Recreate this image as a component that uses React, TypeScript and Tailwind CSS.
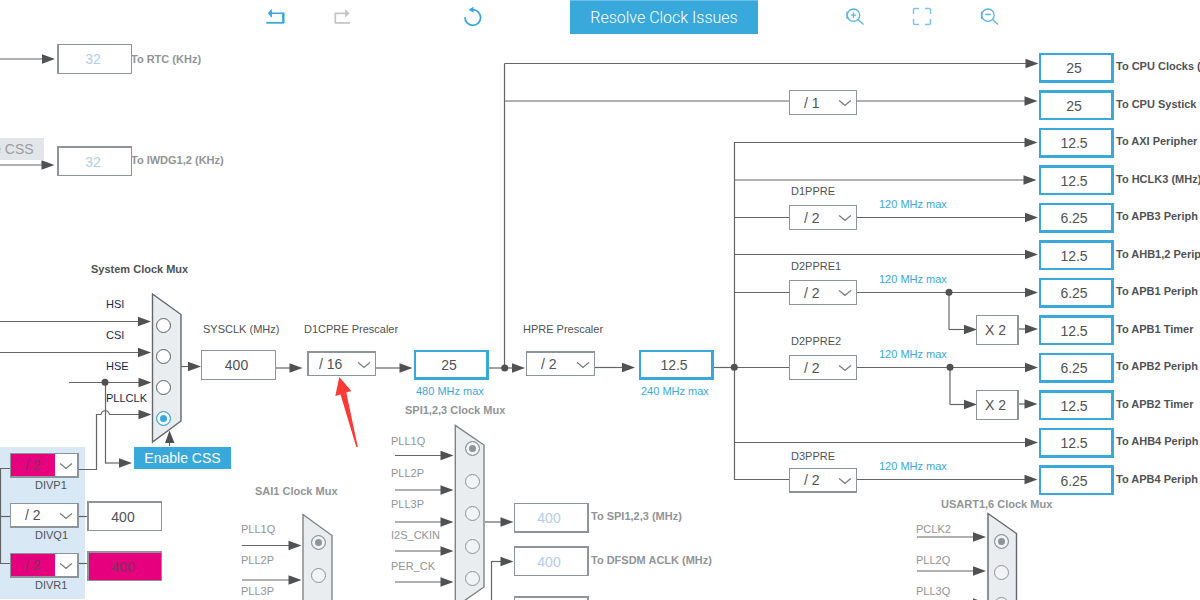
import type { ReactNode } from 'react';

type Tone = 'dark' | 'dim' | 'link' | 'navy';

const toneClass: Record<Tone, string> = {
  dark: 'text-[#505356]',
  dim: 'text-[#919598]',
  link: 'text-[#39a9dc]',
  navy: 'text-[#14284b]',
};

interface CaptionProps {
  at: string;
  text: string;
  tone?: Tone;
  bold?: boolean;
  target?: string;
}

function Caption({ at, text, tone = 'dark', bold = false, target }: CaptionProps) {
  const cls = `absolute whitespace-nowrap text-[11px] leading-4 ${bold ? 'font-bold' : ''} ${toneClass[tone]} ${at}`;
  return target ? (
    <label htmlFor={target} className={cls}>{text}</label>
  ) : (
    <span className={cls}>{text}</span>
  );
}

type BoxLook = 'active' | 'plain' | 'dim' | 'error';

const boxClass: Record<BoxLook, string> = {
  active: 'border-[#39a9dc] bg-white text-[#505356]',
  plain: 'border-[#8d949a] bg-white text-[#505356]',
  dim: 'border-[#8d949a] bg-white text-[#b3cce8]',
  error: 'border-[#8d949a] bg-[#e6007e] text-[#7c3460]',
};

interface ValueBoxProps {
  id: string;
  at: string;
  value: string;
  look: BoxLook;
  edges: string;
  name?: string;
}

function ValueBox({ id, at, value, look, edges, name }: ValueBoxProps) {
  return (
    <input
      id={id}
      type="text"
      readOnly
      defaultValue={value}
      aria-label={name}
      className={`absolute h-[30px] w-[75px] rounded-none pr-1 text-center text-sm outline-none ${boxClass[look]} ${edges} ${at}`}
    />
  );
}

interface DividerProps {
  id: string;
  at: string;
  value: string;
  edges?: string;
  wide?: boolean;
  pad?: string;
  error?: boolean;
  name?: string;
}

function Divider({ id, at, value, edges = 'border', wide = false, pad = 'pl-3.5', error = false, name }: DividerProps) {
  return (
    <div className={`absolute flex h-[25px] ${wide ? 'w-[69px]' : 'w-[68px]'} border-[#8d949a] bg-white ${edges} ${at}`}>
      <select
        id={id}
        aria-label={name}
        defaultValue={value}
        className={`h-full w-full appearance-none rounded-none text-sm leading-4 outline-none ${pad} ${
          error
            ? 'bg-[linear-gradient(to_right,#e6007e_44px,#ffffff_44px)] text-[#7c3460]'
            : 'bg-white text-[#505356]'
        }`}
      >
        <option value={value}>{value}</option>
      </select>
      <svg className="pointer-events-none absolute top-2 right-1 h-2 w-3.5" viewBox="0 0 14 8" fill="none" stroke="#777b7f" strokeWidth="1.2" aria-hidden="true">
        <path d="M1 1.5 L3 3 L7 6.5 L11 3 L13 1.5" />
      </svg>
    </div>
  );
}

interface RadioProps {
  at: string;
  group: string;
  name: string;
  checked?: boolean;
  dim?: boolean;
}

function Radio({ at, group, name, checked = false, dim = false }: RadioProps) {
  return (
    <input
      type="radio"
      name={group}
      aria-label={name}
      defaultChecked={checked}
      className={`absolute size-[15px] appearance-none rounded-full border ${
        dim
          ? 'border-[#8d949a] bg-[#f1f3f5] checked:bg-[#8d949a] checked:shadow-[inset_0_0_0_3px_#f1f3f5]'
          : 'border-[#5b5f63] bg-white checked:border-[#39a9dc] checked:bg-[#39a9dc] checked:shadow-[inset_0_0_0_3px_#ffffff]'
      } ${at}`}
    />
  );
}

function ToolButton({ label, disabled, children }: { label: string; disabled?: boolean; children: ReactNode }) {
  return (
    <button type="button" aria-label={label} disabled={disabled} className="flex h-[34px] w-[22px] items-center justify-center">
      <svg className="size-[22px]" viewBox="0 0 22 22" fill="none" aria-hidden="true">
        {children}
      </svg>
    </button>
  );
}

const dividedRows = [
  { y: 63.5, from: 504.5, tip: 1038.5 },
  { y: 101, from: 504.5, tip: 1037.5 },
  { y: 142.5, from: 734.5, tip: 1037.5 },
  { y: 180, from: 734.5, tip: 1036.5 },
  { y: 217.5, from: 734.5, tip: 1038 },
  { y: 254.5, from: 734.5, tip: 1038 },
  { y: 292.5, from: 734.5, tip: 1038 },
  { y: 329, from: 1019, tip: 1038 },
  { y: 367.5, from: 734.5, tip: 1038 },
  { y: 404, from: 1019, tip: 1037.5 },
  { y: 442.5, from: 734.5, tip: 1038 },
  { y: 479.5, from: 734.5, tip: 1037.5 },
];

const arrows = [
  ...dividedRows,
  { y: 59, from: 0, tip: 55 },
  { y: 165, from: 0, tip: 54.5 },
  { y: 321.5, from: 0, tip: 151 },
  { y: 352.5, from: 0, tip: 151 },
  { y: 382.5, from: 69, tip: 151.5 },
  { y: 414.5, from: 109, tip: 151.5 },
  { y: 463, from: 105.5, tip: 132 },
  { y: 366.5, from: 181, tip: 201 },
  { y: 368, from: 276, tip: 302.5 },
  { y: 368, from: 376, tip: 412.5 },
  { y: 368, from: 489, tip: 525 },
  { y: 367.5, from: 595, tip: 635 },
  { y: 329.5, from: 949, tip: 977 },
  { y: 404.5, from: 950, tip: 977 },
  { y: 455.5, from: 395, tip: 453.5 },
  { y: 490, from: 395, tip: 453.5 },
  { y: 522, from: 395, tip: 453.5 },
  { y: 551, from: 395, tip: 453.5 },
  { y: 582, from: 395, tip: 453.5 },
  { y: 522, from: 485, tip: 513.5 },
  { y: 561.5, from: 491.5, tip: 513.5 },
  { y: 545.5, from: 242, tip: 301.5 },
  { y: 580, from: 242, tip: 301.5 },
  { y: 537, from: 917, tip: 986 },
  { y: 571, from: 917, tip: 986 },
  { y: 603, from: 917, tip: 986 },
];

const wires = [
  'M504.5 368V63.5',
  'M734.5 142V480',
  'M714 367.5H734',
  'M949 292V329.5',
  'M950 367V404.5',
  'M105.5 382V463.5',
  'M79 469.5H96.5V414.5H101C102 409.500 108.500 409.500 109.500 414.500',
  'M10 468.500H0.500V563.500H10',
  'M0 516.500H10',
  'M79 516.500H87',
  'M79 563.500H87',
  'M491.500 600V561',
  'M169.500 446V440',
];

function Wiring() {
  return (
    <svg className="absolute inset-0 size-full" aria-hidden="true">
      <g fill="none" stroke="#636567" strokeWidth="1.2">
        {wires.map((d) => (
          <path key={d} d={d} />
        ))}
      </g>
      {arrows.map(({ y, from, tip }) => (
        <g key={`${from}-${y}`}>
          <path d={`M${from} ${y}H${tip - 10}`} stroke="#636567" strokeWidth="1.2" />
          <path d={`M${tip} ${y}L${tip - 13} ${y - 4.8}V${y + 4.8}Z`} fill="#4f5152" />
        </g>
      ))}
      <path d="M169.500 430.500L165 443H174.500Z" fill="#4f5152" />
      <g fill="#4f5152">
        <circle cx="105" cy="382.3" r="3.5" />
        <circle cx="504.7" cy="368" r="3.5" />
        <circle cx="734.3" cy="367.3" r="3.5" />
        <circle cx="949" cy="292.3" r="3.5" />
        <circle cx="950" cy="367.3" r="3.5" />
      </g>
      <g fill="#e9edf0" strokeWidth="1.4">
        <path d="M152.500 294L181 314.500V421L152.500 442Z" stroke="#63676b" />
        <path d="M455.300 425.300L484 445V587L455.300 607Z" stroke="#7e8386" />
        <path d="M303 514.500L332 535.500V620H303Z" stroke="#7e8386" />
        <path d="M988 513.500L1016.500 533.500V620H988Z" stroke="#63676b" />
      </g>
      <path d="M339.300 377L351.300 391L346.300 392.500L357.800 447L356.300 447L340.500 394.500L335.300 396Z" fill="#fb3a37" />
    </svg>
  );
}

const evenEdge = 'border-2 border-r-[3px] border-b-[3px]';
const oddEdge = 'border-2 border-r-[3px] border-t-[3px]';

const outputs = [
  { id: 'cpu', box: 'left-[1039px] top-[53px]', cap: 'left-[1116px] top-[58px]', value: '25', text: 'To CPU Clocks (', edges: evenEdge },
  { id: 'systick', box: 'left-[1039px] top-[90px]', cap: 'left-[1116px] top-[96px]', value: '25', text: 'To CPU Systick', edges: oddEdge },
  { id: 'axi', box: 'left-[1039px] top-[128px]', cap: 'left-[1116px] top-[133px]', value: '12.5', text: 'To AXI Peripher', edges: evenEdge },
  { id: 'hclk3', box: 'left-[1039px] top-[165px]', cap: 'left-[1116px] top-[171px]', value: '12.5', text: 'To HCLK3 (MHz)', edges: oddEdge },
  { id: 'apb3', box: 'left-[1039px] top-[203px]', cap: 'left-[1116px] top-[208px]', value: '6.25', text: 'To APB3 Periph', edges: evenEdge },
  { id: 'ahb12', box: 'left-[1039px] top-[240px]', cap: 'left-[1116px] top-[246px]', value: '12.5', text: 'To AHB1,2 Perip', edges: oddEdge },
  { id: 'apb1', box: 'left-[1039px] top-[278px]', cap: 'left-[1116px] top-[283px]', value: '6.25', text: 'To APB1 Periph', edges: evenEdge },
  { id: 'apb1t', box: 'left-[1039px] top-[315px]', cap: 'left-[1116px] top-[321px]', value: '12.5', text: 'To APB1 Timer', edges: oddEdge },
  { id: 'apb2', box: 'left-[1039px] top-[353px]', cap: 'left-[1116px] top-[358px]', value: '6.25', text: 'To APB2 Periph', edges: evenEdge },
  { id: 'apb2t', box: 'left-[1039px] top-[390px]', cap: 'left-[1116px] top-[396px]', value: '12.5', text: 'To APB2 Timer', edges: oddEdge },
  { id: 'ahb4', box: 'left-[1039px] top-[428px]', cap: 'left-[1116px] top-[433px]', value: '12.5', text: 'To AHB4 Periph', edges: evenEdge },
  { id: 'apb4', box: 'left-[1039px] top-[465px]', cap: 'left-[1116px] top-[471px]', value: '6.25', text: 'To APB4 Periph', edges: oddEdge },
];

const captions: CaptionProps[] = [
  { at: 'left-[131px] top-[51px]', text: 'To RTC (KHz)', tone: 'dim', bold: true, target: 'rtc' },
  { at: 'left-[131px] top-[152px]', text: 'To IWDG1,2 (KHz)', tone: 'dim', bold: true, target: 'iwdg' },
  { at: 'left-[91px] top-[261px]', text: 'System Clock Mux', bold: true },
  { at: 'left-[255px] top-[483px]', text: 'SAI1 Clock Mux', tone: 'dim', bold: true },
  { at: 'left-[405px] top-[402px]', text: 'SPI1,2,3 Clock Mux', tone: 'dim', bold: true },
  { at: 'left-[941px] top-[496px]', text: 'USART1,6 Clock Mux', tone: 'dim', bold: true },
  { at: 'left-[591px] top-[508px]', text: 'To SPI1,2,3 (MHz)', tone: 'dim', bold: true, target: 'spi' },
  { at: 'left-[591px] top-[552px]', text: 'To DFSDM ACLK (MHz)', tone: 'dim', bold: true, target: 'dfsdm' },
  { at: 'left-[106px] top-[296px]', text: 'HSI', tone: 'navy' },
  { at: 'left-[106px] top-[327px]', text: 'CSI', tone: 'navy' },
  { at: 'left-[106px] top-[358px]', text: 'HSE', tone: 'navy' },
  { at: 'left-[106px] top-[390px]', text: 'PLLCLK', tone: 'navy' },
  { at: 'left-[203px] top-[321px]', text: 'SYSCLK (MHz)', target: 'sysclk' },
  { at: 'left-[304px] top-[321px]', text: 'D1CPRE Prescaler', target: 'd1cpre' },
  { at: 'left-[523px] top-[321px]', text: 'HPRE Prescaler', target: 'hpre' },
  { at: 'left-[416px] top-[383px]', text: '480 MHz max', tone: 'link' },
  { at: 'left-[641px] top-[383px]', text: '240 MHz max', tone: 'link' },
  { at: 'left-[791px] top-[183px]', text: 'D1PPRE', target: 'd1ppre' },
  { at: 'left-[791px] top-[258px]', text: 'D2PPRE1', target: 'd2ppre1' },
  { at: 'left-[791px] top-[333px]', text: 'D2PPRE2', target: 'd2ppre2' },
  { at: 'left-[791px] top-[448px]', text: 'D3PPRE', target: 'd3ppre' },
  { at: 'left-[879px] top-[196px]', text: '120 MHz max', tone: 'link' },
  { at: 'left-[879px] top-[271px]', text: '120 MHz max', tone: 'link' },
  { at: 'left-[879px] top-[346px]', text: '120 MHz max', tone: 'link' },
  { at: 'left-[879px] top-[458px]', text: '120 MHz max', tone: 'link' },
  { at: 'left-[35px] top-[477px]', text: 'DIVP1', target: 'divp1' },
  { at: 'left-[35px] top-[527px]', text: 'DIVQ1', target: 'divq1' },
  { at: 'left-[35px] top-[577px]', text: 'DIVR1', target: 'divr1' },
  { at: 'left-[391px] top-[433px]', text: 'PLL1Q', tone: 'dim' },
  { at: 'left-[391px] top-[465px]', text: 'PLL2P', tone: 'dim' },
  { at: 'left-[391px] top-[496px]', text: 'PLL3P', tone: 'dim' },
  { at: 'left-[391px] top-[527px]', text: 'I2S_CKIN', tone: 'dim' },
  { at: 'left-[391px] top-[558px]', text: 'PER_CK', tone: 'dim' },
  { at: 'left-[241px] top-[521px]', text: 'PLL1Q', tone: 'dim' },
  { at: 'left-[241px] top-[552px]', text: 'PLL2P', tone: 'dim' },
  { at: 'left-[241px] top-[583px]', text: 'PLL3P', tone: 'dim' },
  { at: 'left-[916px] top-[521px]', text: 'PCLK2', tone: 'dim' },
  { at: 'left-[916px] top-[552px]', text: 'PLL2Q', tone: 'dim' },
  { at: 'left-[916px] top-[583px]', text: 'PLL3Q', tone: 'dim' },
];

const radios: RadioProps[] = [
  { at: 'left-[156px] top-[318px]', group: 'system', name: 'HSI' },
  { at: 'left-[156px] top-[349px]', group: 'system', name: 'CSI' },
  { at: 'left-[156px] top-[380px]', group: 'system', name: 'HSE' },
  { at: 'left-[156px] top-[411px]', group: 'system', name: 'PLLCLK', checked: true },
  { at: 'left-[465px] top-[441px]', group: 'spi-mux', name: 'PLL1Q', checked: true, dim: true },
  { at: 'left-[465px] top-[474px]', group: 'spi-mux', name: 'PLL2P', dim: true },
  { at: 'left-[465px] top-[506px]', group: 'spi-mux', name: 'PLL3P', dim: true },
  { at: 'left-[465px] top-[539px]', group: 'spi-mux', name: 'I2S_CKIN', dim: true },
  { at: 'left-[465px] top-[571px]', group: 'spi-mux', name: 'PER_CK', dim: true },
  { at: 'left-[311px] top-[535px]', group: 'sai-mux', name: 'PLL1Q', checked: true, dim: true },
  { at: 'left-[311px] top-[568px]', group: 'sai-mux', name: 'PLL2P', dim: true },
  { at: 'left-[994px] top-[534px]', group: 'usart-mux', name: 'PCLK2', checked: true, dim: true },
  { at: 'left-[994px] top-[565px]', group: 'usart-mux', name: 'PLL2Q', dim: true },
  { at: 'left-[994px] top-[597px]', group: 'usart-mux', name: 'PLL3Q', dim: true },
];

function Toolbar() {
  return (
    <header className="z-10 col-start-1 row-start-1 flex h-[34px] items-center self-start pl-[264px]">
      <div className="flex gap-[45px]">
        <ToolButton label="Undo">
          <path d="M5 7.300H19.300V16.700" stroke="#39a9dc" strokeWidth="1.6" />
          <path d="M19.300 6.800V17" stroke="#39a9dc" strokeWidth="2.400" />
          <path d="M2.300 16.800H20" stroke="#39a9dc" strokeWidth="1.800" />
          <path d="M7.500 3.500L4.300 7.300L7.500 11.200Z" fill="#39a9dc" stroke="#39a9dc" strokeWidth="0.800" />
        </ToolButton>
        <ToolButton label="Redo" disabled>
          <path d="M16 7.300H4.300V16.800H19" stroke="#c4c4c4" strokeWidth="1.700" strokeLinejoin="round" />
          <path d="M14.500 3.800L18 7.300L14.500 11Z" fill="#c4c4c4" stroke="#c4c4c4" strokeWidth="0.800" />
        </ToolButton>
      </div>
      <div className="ml-[109px] flex">
        <ToolButton label="Reset">
          <path d="M3 11.300A7.800 7.800 0 1 0 10.800 3.700H8.500" stroke="#39a9dc" strokeWidth="1.800" />
          <path d="M11.500 0.800L6.500 3.700L11.500 6.700Z" fill="#39a9dc" />
        </ToolButton>
      </div>
      <button type="button" className="ml-[86px] h-[34px] w-[188px] shrink-0 border-t border-[#6cbfe5] bg-[#39a9dc] font-[Roboto,sans-serif] text-base font-light whitespace-nowrap text-white">
        Resolve Clock Issues
      </button>
      <div className="ml-[86px] flex gap-[45px]">
        <ToolButton label="Zoom in">
          <circle cx="9.500" cy="9.200" r="6.200" stroke="#5bb4de" strokeWidth="1.300" />
          <path d="M3 5.500V13M9.500 6.500V12M6.800 9.200H12.200M14 13.500L19.500 18.500" stroke="#5bb4de" strokeWidth="1.300" />
        </ToolButton>
        <ToolButton label="Fit to window">
          <path d="M2.500 8V4Q2.500 2.500 4 2.500H8M14 2.500H18Q19.500 2.500 19.500 4V8M19.500 13V17Q19.500 18.500 18 18.500H14M8 18.500H4Q2.500 18.500 2.500 17V13" stroke="#7cc4e8" strokeWidth="1.500" />
        </ToolButton>
        <ToolButton label="Zoom out">
          <circle cx="10" cy="9.200" r="6.200" stroke="#5bb4de" strokeWidth="1.300" />
          <path d="M3.500 5.500V13M7.200 8.500H12.800M14.500 13.500L20 18.500" stroke="#5bb4de" strokeWidth="1.300" />
        </ToolButton>
      </div>
    </header>
  );
}

export default function App() {
  return (
    <div className="grid min-h-screen overflow-hidden bg-white font-['Liberation_Sans',Arial,sans-serif]">
      <Toolbar />
      <main className="relative col-start-1 row-start-1 min-w-0 overflow-hidden">
        <div className="absolute top-[447px] left-0 h-[152px] w-[85px] bg-[#d9e8f5]" />
        <Wiring />

        <button type="button" disabled className="absolute top-[138px] left-[-53px] h-[22px] w-[97px] bg-[#e2e6e9] text-sm text-[#9a9da0]">
          Enable CSS
        </button>
        <button type="button" className="absolute top-[447px] left-[134px] h-[22px] w-[97px] bg-[#39a9dc] text-sm text-white">
          Enable CSS
        </button>

        <ValueBox id="rtc" at="left-[57px] top-[44px]" value="32" look="dim" edges="border border-l-2" />
        <ValueBox id="iwdg" at="left-[57px] top-[146px]" value="32" look="dim" edges="border border-t-2 border-l-2" />
        <ValueBox id="sysclk" at="left-[201px] top-[350px]" value="400" look="plain" edges="border" />
        <ValueBox id="cpuclk" at="left-[414px] top-[350px]" value="25" look="active" edges={evenEdge} name="D1CPRE output" />
        <ValueBox id="hclk" at="left-[639px] top-[350px]" value="12.5" look="active" edges={evenEdge} name="HPRE output" />
        <ValueBox id="pllq" at="left-[87px] top-[501px]" value="400" look="plain" edges="border border-t-2 border-l-2" name="DIVQ1 output" />
        <ValueBox id="pllr" at="left-[87px] top-[551px]" value="400" look="error" edges="border border-t-2 border-l-2" name="DIVR1 output" />
        <ValueBox id="spi" at="left-[514px] top-[503px]" value="400" look="dim" edges="border border-r-2 border-b-2" />
        <ValueBox id="dfsdm" at="left-[514px] top-[546px]" value="400" look="dim" edges="border border-t-2 border-r-2" />
        <ValueBox id="next" at="left-[514px] top-[596px]" value="" look="dim" edges="border border-t-2 border-r-2" name="Output" />

        <Divider id="divp1" at="left-[10px] top-[453px]" value="/ 2" wide error edges="border border-r-2 border-b-2" />
        <Divider id="divq1" at="left-[10px] top-[503px]" value="/ 2" wide edges="border border-r-2 border-b-2" />
        <Divider id="divr1" at="left-[10px] top-[553px]" value="/ 2" wide error edges="border border-r-2 border-b-2" />
        <Divider id="d1cpre" at="left-[307px] top-[351px]" value="/ 16" wide pad="pl-2.5" edges="border border-t-2 border-l-2" />
        <Divider id="hpre" at="left-[526px] top-[351px]" value="/ 2" wide edges="border border-t-2" />
        <Divider id="systick-div" at="left-[789px] top-[90px]" value="/ 1" name="CPU Systick prescaler" />
        <Divider id="d1ppre" at="left-[789px] top-[205px]" value="/ 2" />
        <Divider id="d2ppre1" at="left-[789px] top-[280px]" value="/ 2" />
        <Divider id="d2ppre2" at="left-[789px] top-[355px]" value="/ 2" />
        <Divider id="d3ppre" at="left-[789px] top-[468px]" value="/ 2" edges="border border-b-2" />

        <div className="absolute top-[315px] left-[976px] flex h-[30px] w-[43px] items-center border border-r-2 border-[#8d949a] bg-white pl-2 text-sm text-[#505356]">X 2</div>
        <div className="absolute top-[390px] left-[976px] flex h-[30px] w-[43px] items-center border border-r-2 border-[#8d949a] bg-white pl-2 text-sm text-[#505356]">X 2</div>

        {outputs.map((o) => (
          <ValueBox key={o.id} id={o.id} at={o.box} value={o.value} look="active" edges={o.edges} />
        ))}
        {outputs.map((o) => (
          <Caption key={o.id} at={o.cap} text={o.text} bold target={o.id} />
        ))}
        {captions.map((c) => (
          <Caption key={c.at} {...c} />
        ))}
        {radios.map((r) => (
          <Radio key={r.at} {...r} />
        ))}
      </main>
    </div>
  );
}
